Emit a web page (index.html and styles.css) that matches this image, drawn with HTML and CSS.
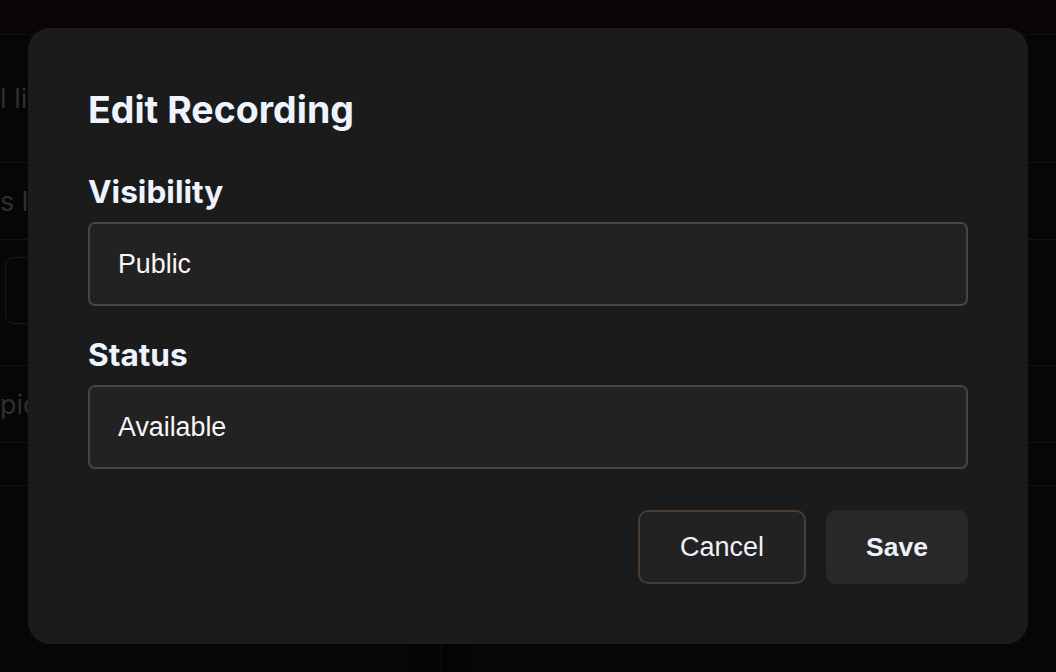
FILE: index.html
```html
<!DOCTYPE html>
<html lang="en">
<head>
<meta charset="utf-8">
<title>Edit Recording</title>
<link rel="stylesheet" href="styles.css">
</head>
<body>
<div class="page">
  <header class="topbar"></header>
  <main class="content">
    <section class="list">
      <div class="row row-tall"><span class="row-text">l li</span></div>
      <div class="row"><span class="row-text">s l</span></div>
      <div class="row row-box"><span class="ghost-btn"></span></div>
      <div class="row"><span class="row-text">pic</span></div>
      <div class="row row-short"></div>
    </section>
    <section class="bottom">
      <div class="col"></div>
      <div class="col col-mid"></div>
      <div class="col"></div>
    </section>
  </main>
</div>

<div class="overlay">
  <div class="modal" role="dialog" aria-labelledby="modal-title">
    <h2 class="modal-title" id="modal-title">Edit Recording</h2>
    <form class="form">
      <div class="field">
        <label class="field-label">Visibility</label>
        <div class="select">Public</div>
      </div>
      <div class="field">
        <label class="field-label">Status</label>
        <div class="select">Available</div>
      </div>
    </form>
    <div class="actions">
      <button class="btn btn-cancel" type="button">Cancel</button>
      <button class="btn btn-save" type="button">Save</button>
    </div>
  </div>
</div>
</body>
</html>
```

FILE: styles.css
```css
* {
  box-sizing: border-box;
}

html, body {
  margin: 0;
  padding: 0;
  height: 100%;
}

body {
  background: #060606;
  font-family: "Liberation Sans", Arial, sans-serif;
  overflow: hidden;
}

/* Background page (dimmed behind the modal) */
.page {
  height: 672px;
  display: flex;
  flex-direction: column;
}

.topbar {
  height: 35px;
  background: #080504;
  border-bottom: 1px solid #121110;
  flex-shrink: 0;
}

.content {
  flex: 1;
  display: flex;
  flex-direction: column;
}

.list {
  display: flex;
  flex-direction: column;
}

.row {
  height: 77px;
  border-bottom: 1px solid #131313;
  display: flex;
  align-items: center;
}

.row-tall {
  height: 128px;
}

.row-box {
  height: 126px;
  align-items: flex-start;
  padding: 17px 0 0 5px;
}

.row-short {
  height: 43px;
}

.row-text {
  font-family: "Inter", sans-serif;
  font-size: 27px;
  color: #2f2f30;
  white-space: nowrap;
}

.ghost-btn {
  display: block;
  width: 60px;
  height: 67px;
  border: 1px solid #1a1a1a;
  border-radius: 8px;
}

.bottom {
  flex: 1;
  display: flex;
  padding-left: 407px;
}

.col {
  width: 34px;
  border-left: 1px solid #0b0a09;
  border-right: 1px solid #0b0a09;
  background: #050403;
}

.col-mid {
  width: 0;
  border: none;
  background: none;
}

/* Overlay + modal */
.overlay {
  position: fixed;
  inset: 0;
  display: flex;
  align-items: center;
  justify-content: center;
}

.modal {
  width: 1000px;
  background: #1b1b1b;
  border-radius: 22px;
  padding: 60px;
  display: flex;
  flex-direction: column;
}

.modal-title {
  margin: 0 0 42px;
  font-family: "Inter", sans-serif;
  font-weight: 700;
  font-size: 37.5px;
  line-height: 43px;
  color: #eef4fd;
}

.form {
  display: flex;
  flex-direction: column;
  gap: 30px;
}

.field {
  display: flex;
  flex-direction: column;
  gap: 12px;
}

.field-label {
  font-family: "Inter", sans-serif;
  font-weight: 700;
  font-size: 31.6px;
  line-height: 37px;
  color: #eef4fd;
}

.select {
  height: 84px;
  border: 2px solid #454545;
  border-radius: 7px;
  background: #222222;
  padding: 0 28px;
  display: flex;
  align-items: center;
  font-size: 26.8px;
  color: #f7f7f7;
}

.actions {
  margin-top: 41px;
  display: flex;
  justify-content: flex-end;
  gap: 20px;
}

.btn {
  height: 74px;
  border-radius: 10px;
  font-family: "Liberation Sans", Arial, sans-serif;
  font-size: 27px;
  color: #edf2fa;
  border: 2px solid transparent;
}

.btn-cancel {
  padding: 0 40px;
  background: #222222;
  border-color: #4a3c30;
  font-weight: 400;
}

.btn-save {
  padding: 0 38px;
  background: #282828;
  border-color: #282828;
  font-weight: 700;
  font-size: 26.5px;
}
```
